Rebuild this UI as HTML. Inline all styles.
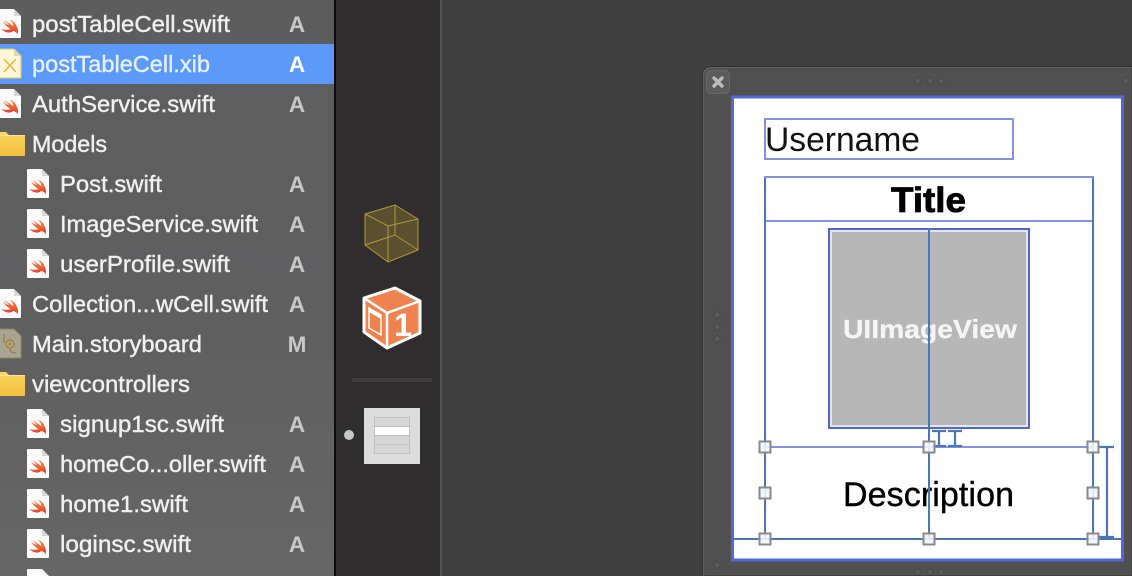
<!DOCTYPE html>
<html><head><meta charset="utf-8"><style>
html,body{margin:0;padding:0;background:#404040;width:1132px;height:576px;overflow:hidden}
svg{display:block}
.f{font-family:"Liberation Sans",sans-serif;font-size:23.5px;fill:#f0f0f0;font-weight:400;stroke:#f0f0f0;stroke-width:.4px}
.s{font-family:"Liberation Sans",sans-serif;font-size:22.5px;fill:#c9c9c9;font-weight:700;text-anchor:middle}
</style></head><body>
<svg width="1132" height="576" viewBox="0 0 1132 576" xmlns="http://www.w3.org/2000/svg">
<defs>
<linearGradient id="side" x1="0" y1="0" x2="0" y2="1"><stop offset="0" stop-color="#5d5d5e"/><stop offset=".6" stop-color="#605f60"/><stop offset="1" stop-color="#676667"/></linearGradient>
<linearGradient id="bird" x1="0" y1="0" x2="0" y2="1"><stop offset="0" stop-color="#f58a3c"/><stop offset="1" stop-color="#e53b2e"/></linearGradient>
<linearGradient id="fold" x1="0" y1="0" x2="0" y2="1"><stop offset="0" stop-color="#fad662"/><stop offset="1" stop-color="#f2bf3c"/></linearGradient>
<g id="swift">
<path d="M1 0H15L22 7V28Q22 29 21 29H1Q0 29 0 28V1Q0 0 1 0Z" fill="#fbfbfb"/>
<path d="M15 0V7H22Z" fill="#d8d8dc"/>
<path d="M2 20C7 24 11 24.5 13.8 22.2C15.8 22 17.5 23.3 18.6 25C19.4 22.4 18.9 19.5 17.6 17.5C17 14.8 14.5 12 11 10.5C13.3 12.8 14.4 15 14.4 17C11.2 15.3 8.5 13.2 5.5 11C7.2 13.3 9 15 10.6 16.6C8.4 15.5 6.3 14.2 4 12.6C6.2 16 9 18.6 11.7 20C9 21 5.8 21 2 20Z" fill="url(#bird)"/>
</g>
<g id="folder">
<path d="M-2 0H6L9 3H24Q25 3 25 4V23Q25 24 24 24H-2Z" fill="url(#fold)"/>
<path d="M-2 3.5H25" stroke="#fde49a" stroke-width="1"/>
</g>
<g id="h"><rect x="-5.5" y="-5.5" width="11" height="11" fill="#f2f5fa" fill-opacity=".9" stroke="#8a8a8a" stroke-width="2"/></g>
<g id="dot"><circle r="3" fill="#5a5a5a" stroke="#484848" stroke-width="1"/></g>
</defs>

<rect width="1132" height="576" fill="#404040"/>
<!-- sidebar -->
<rect width="334" height="576" fill="url(#side)"/>
<rect y="44" width="334" height="40" fill="#5b9afa"/>
<rect x="334" width="2" height="576" fill="#0c0c0c"/>
<rect x="336" width="104" height="576" fill="#2f2d2e"/>
<rect x="440" width="2" height="576" fill="#555555"/>

<!-- file icons -->
<use href="#swift" x="-1" y="9"/>
<g transform="translate(-1 49)"><path d="M0 0H15L22 7V29H0Z" fill="#fdf6d8" stroke="#e8c860" stroke-width="1"/><path d="M15 0V7H22Z" fill="#e2d9b0"/><path d="M5 10L17 23M17 10L5 23" stroke="#e9b93f" stroke-width="1.6" fill="none"/></g>
<use href="#swift" x="-1" y="89"/>
<use href="#folder" x="0" y="132"/>
<use href="#swift" x="27" y="169"/>
<use href="#swift" x="27" y="209"/>
<use href="#swift" x="27" y="249"/>
<use href="#swift" x="-1" y="289"/>
<g transform="translate(-1 329)"><path d="M0 0H15L22 7V29H0Z" fill="#a9a491" stroke="#8d8560" stroke-width="1"/><circle cx="11" cy="15" r="4" fill="none" stroke="#a8873a" stroke-width="1.4"/><circle cx="11" cy="15" r="1.4" fill="#a8873a"/><path d="M5 5V14M11 20Q11 24 17 24" stroke="#8d7a40" stroke-width="1" fill="none"/></g>
<use href="#folder" x="0" y="372"/>
<use href="#swift" x="27" y="409"/>
<use href="#swift" x="27" y="449"/>
<use href="#swift" x="27" y="489"/>
<use href="#swift" x="27" y="529"/>
<path d="M28 569H42L49 576H27V570Q27 569 28 569Z" fill="#fbfbfb"/>

<!-- file names -->
<text class="f" x="32" y="32" textLength="198" lengthAdjust="spacingAndGlyphs">postTableCell.swift</text>
<text class="f" x="32" y="72" textLength="178" lengthAdjust="spacingAndGlyphs" style="fill:#e6f0ff;stroke:#e6f0ff">postTableCell.xib</text>
<text class="f" x="32" y="112" textLength="183" lengthAdjust="spacingAndGlyphs">AuthService.swift</text>
<text class="f" x="32" y="152" textLength="75" lengthAdjust="spacingAndGlyphs">Models</text>
<text class="f" x="60" y="192" textLength="102" lengthAdjust="spacingAndGlyphs">Post.swift</text>
<text class="f" x="60" y="232" textLength="198" lengthAdjust="spacingAndGlyphs">ImageService.swift</text>
<text class="f" x="60" y="272" textLength="170" lengthAdjust="spacingAndGlyphs">userProfile.swift</text>
<text class="f" x="32" y="312" textLength="236" lengthAdjust="spacingAndGlyphs">Collection...wCell.swift</text>
<text class="f" x="32" y="352" textLength="170" lengthAdjust="spacingAndGlyphs">Main.storyboard</text>
<text class="f" x="32" y="392" textLength="158" lengthAdjust="spacingAndGlyphs">viewcontrollers</text>
<text class="f" x="60" y="432" textLength="164" lengthAdjust="spacingAndGlyphs">signup1sc.swift</text>
<text class="f" x="60" y="472" textLength="206" lengthAdjust="spacingAndGlyphs">homeCo...oller.swift</text>
<text class="f" x="60" y="512" textLength="128" lengthAdjust="spacingAndGlyphs">home1.swift</text>
<text class="f" x="60" y="552" textLength="131" lengthAdjust="spacingAndGlyphs">loginsc.swift</text>

<!-- status -->
<text class="s" x="297" y="32">A</text>
<text class="s" x="297" y="72" style="fill:#fff">A</text>
<text class="s" x="297" y="112">A</text>
<text class="s" x="297" y="192">A</text>
<text class="s" x="297" y="232">A</text>
<text class="s" x="297" y="272">A</text>
<text class="s" x="297" y="312">A</text>
<text class="s" x="297" y="352">M</text>
<text class="s" x="297" y="432">A</text>
<text class="s" x="297" y="472">A</text>
<text class="s" x="297" y="512">A</text>
<text class="s" x="297" y="552">A</text>

<!-- yellow cube -->
<g stroke="#b2963c" stroke-width="1" stroke-linejoin="round">
<path d="M395 205L418 219V250L388 262L365 245V214Z" fill="#5a5030"/>
<path d="M365 214L388 226L418 219M388 226V262M395 205V235M365 245L395 235L418 250" fill="none"/>
</g>
<!-- orange cube -->
<g stroke="#fff" stroke-linejoin="round">
<path d="M395 288L420 301V333L387 348L364 332V298Z" fill="#ee8350" stroke-width="3"/>
<path d="M364 298L387 313L420 301M387 313V348" fill="none" stroke-width="2.5"/>
</g>
<path d="M369 308L381 315V335L369 328Z" fill="none" stroke="#fff" stroke-width="1.5"/>
<path d="M369 308L381 315V319L369 312Z" fill="#fff"/>
<text x="403" y="336" font-family="Liberation Sans,sans-serif" font-weight="700" font-size="32" fill="#fff" text-anchor="middle">1</text>
<!-- divider + table icon -->
<rect x="352" y="378" width="80" height="4" fill="#3d3c3d"/>
<circle cx="349" cy="435" r="5" fill="#c6c6c8"/>
<rect x="364" y="408" width="56" height="56" fill="#dcdcdc"/>
<rect x="374.5" y="417.5" width="35" height="36" fill="#d6d6d6" stroke="#c2c2c2" stroke-width="1"/>
<rect x="374.5" y="426.5" width="35" height="9" fill="#fff" stroke="#bdbdbd" stroke-width="1"/>
<path d="M374 444.5H410" stroke="#c2c2c2" stroke-width="1"/>

<!-- IB window (clipped to frame) -->
<path d="M702.5 576V75.5Q702.5 66.5 711.5 66.5H1132V576Z" fill="#505050" stroke="#2f2f2f" stroke-width="1"/>
<path d="M703.5 576V75.5Q703.5 67.5 711.5 67.5H1132" fill="none" stroke="#636363" stroke-width="1"/>
<rect x="706.5" y="70.5" width="23" height="23" rx="5" fill="#5c5c5c" stroke="#686868" stroke-width="1"/>
<path d="M714 78L722 86M722 78L714 86" stroke="#bdbdbd" stroke-width="3.4" stroke-linecap="round"/>
<use href="#dot" x="918" y="81"/><use href="#dot" x="930" y="81"/><use href="#dot" x="941" y="81"/><use href="#dot" x="1126" y="81"/>
<use href="#dot" x="717" y="315"/><use href="#dot" x="717" y="327"/><use href="#dot" x="717" y="339"/>
<use href="#dot" x="717" y="565"/>
<use href="#dot" x="918" y="572"/><use href="#dot" x="930" y="572"/><use href="#dot" x="941" y="572"/>

<!-- canvas -->
<rect x="732.5" y="97" width="390" height="463" fill="#fff" stroke="#5268d8" stroke-width="3"/>

<!-- username -->
<rect x="765" y="119" width="248" height="40" fill="#fff" stroke="#8592e4" stroke-width="2"/>
<text x="765" y="151" font-family="Liberation Sans,sans-serif" font-size="34" fill="#111" textLength="155" lengthAdjust="spacingAndGlyphs">Username</text>

<!-- title -->
<path d="M764 177H1094M764 221H1094" stroke="#8592e4" stroke-width="2" fill="none"/>
<text x="891" y="212" font-family="Liberation Sans,sans-serif" font-size="35" font-weight="700" fill="#000" stroke="#000" stroke-width=".8" textLength="75" lengthAdjust="spacingAndGlyphs">Title</text>

<!-- image view -->
<rect x="829" y="229" width="200" height="199" fill="#e6e6f4" stroke="#5268c4" stroke-width="2"/>
<rect x="832" y="232" width="194" height="193" fill="#b7b7b7"/>
<text x="843" y="338" font-family="Liberation Sans,sans-serif" font-size="26" font-weight="700" fill="#f5f5f5" stroke="#f5f5f5" stroke-width=".3" textLength="174" lengthAdjust="spacingAndGlyphs">UIImageView</text>

<!-- description -->
<text x="843" y="506" font-family="Liberation Sans,sans-serif" font-size="34" fill="#000" stroke="#000" stroke-width=".4" textLength="171" lengthAdjust="spacing">Description</text>

<!-- constraints / lines -->
<path d="M765 447H1093" stroke="#8592e4" stroke-width="2" fill="none"/>
<path d="M765 178V539M1093 178V539M929 228V539M733 539H1122" stroke="#4a78b4" stroke-width="2" fill="none"/>
<path d="M932 431H946M939 431V446M932 446H946M948 431H962M955 431V446M948 446H962" stroke="#4a78b4" stroke-width="2.2" fill="none"/>
<path d="M1099 447H1114M1107 447V537M1099 537H1114" stroke="#4a78b4" stroke-width="2.2" fill="none"/>

<!-- handles -->
<use href="#h" x="765" y="447"/><use href="#h" x="929" y="447"/><use href="#h" x="1093" y="447"/>
<use href="#h" x="765" y="493"/><use href="#h" x="1093" y="493"/>
<use href="#h" x="765" y="539"/><use href="#h" x="929" y="539"/><use href="#h" x="1093" y="539"/>
</svg>
</body></html>
